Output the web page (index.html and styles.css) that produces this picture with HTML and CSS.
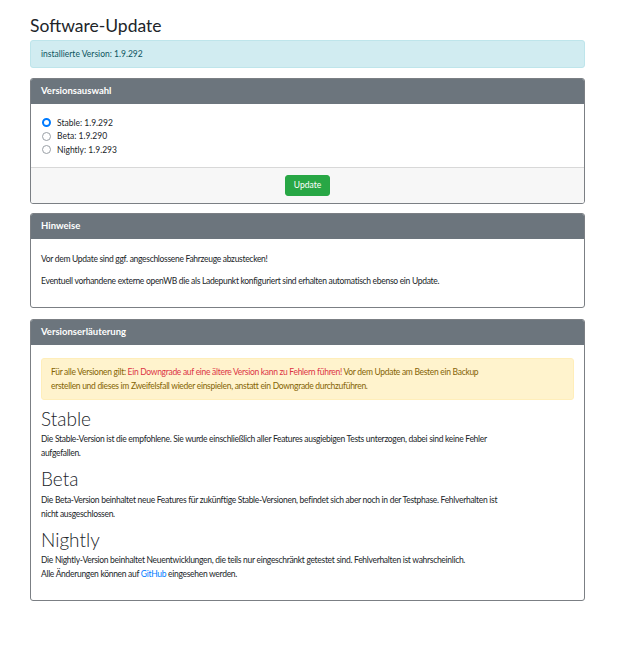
FILE: index.html
```html
<!DOCTYPE html>
<html lang="de">
<head>
    <meta charset="UTF-8">
    <title>Software-Update</title>
    <link rel="stylesheet" href="styles.css">
</head>
<body>
    <div class="container">
        <h1>Software-Update</h1>
        <div class="alert alert-info">installierte Version: 1.9.292</div>

        <div class="card">
            <div class="card-header">Versionsauswahl</div>
            <div class="card-body radios">
                <label class="radio"><span class="dot checked"></span>Stable: 1.9.292</label>
                <label class="radio"><span class="dot"></span>Beta: 1.9.290</label>
                <label class="radio"><span class="dot"></span>Nightly: 1.9.293</label>
            </div>
            <div class="card-footer">
                <button class="btn-success">Update</button>
            </div>
        </div>

        <div class="card">
            <div class="card-header">Hinweise</div>
            <div class="card-body">
                <p>Vor dem Update sind ggf. angeschlossene Fahrzeuge abzustecken!</p>
                <p>Eventuell vorhandene externe openWB die als Ladepunkt konfiguriert sind erhalten automatisch ebenso ein Update.</p>
            </div>
        </div>

        <div class="card">
            <div class="card-header">Versionserläuterung</div>
            <div class="card-body">
                <div class="alert alert-warning">
                    Für alle Versionen gilt: <span class="danger">Ein Downgrade auf eine ältere Version kann zu Fehlern führen!</span> Vor dem Update am Besten ein Backup erstellen und dieses im Zweifelsfall wieder einspielen, anstatt ein Downgrade durchzuführen.
                </div>
                <h2>Stable</h2>
                <p>Die Stable-Version ist die empfohlene. Sie wurde einschließlich aller Features ausgiebigen Tests unterzogen, dabei sind keine Fehler aufgefallen.</p>
                <h2>Beta</h2>
                <p>Die Beta-Version beinhaltet neue Features für zukünftige Stable-Versionen, befindet sich aber noch in der Testphase. Fehlverhalten ist nicht ausgeschlossen.</p>
                <h2>Nightly</h2>
                <p>Die Nightly-Version beinhaltet Neuentwicklungen, die teils nur eingeschränkt getestet sind. Fehlverhalten ist wahrscheinlich.<br>
                Alle Änderungen können auf <a href="#">GitHub</a> eingesehen werden.</p>
            </div>
        </div>
    </div>
</body>
</html>
```

FILE: styles.css
```css
* {
    margin: 0;
    padding: 0;
    box-sizing: border-box;
}

body {
    font-family: Lato, 'Open Sans', sans-serif;
    font-size: 8.5px;
    line-height: 14px;
    color: #212529;
    background: #fff;
}

.container {
    width: 555px;
    margin-left: 30px;
    padding-top: 14px;
}

h1 {
    font-size: 17.5px;
    font-weight: 400;
    line-height: 24px;
    margin-bottom: 2px;
}

.alert {
    border: 1px solid transparent;
    border-radius: 3px;
    padding: 6px 10px;
    margin-bottom: 10px;
}

.alert-info {
    background: #d1ecf1;
    border-color: #bee5eb;
    color: #0c5460;
}

.alert-warning {
    background: #fff3cd;
    border-color: #ffeeba;
    color: #856404;
    padding: 6px 66px 6px 9px;
    margin-bottom: 8px;
    letter-spacing: -0.3px;
}

.danger {
    color: #dc3545;
}

.card {
    border: 1px solid #7b7f84;
    border-radius: 3px;
    margin-bottom: 9px;
    overflow: hidden;
}

.card + .card + .card {
    margin-top: 11px;
}

.card-header {
    background: #6c757d;
    color: #fff;
    font-size: 9.5px;
    font-weight: 700;
    height: 25px;
    line-height: 24px;
    padding: 0 10px;
}

.card-body {
    padding: 13px 10px 11px;
}

.card-body p {
    max-width: 465px;
    margin-bottom: 8px;
    letter-spacing: -0.3px;
}

.radios {
    padding: 12px 10px 10px;
    display: flex;
    flex-direction: column;
}

.radio {
    display: flex;
    align-items: center;
    height: 13.5px;
}

.dot {
    width: 9px;
    height: 9px;
    border-radius: 50%;
    border: 1px solid #9aa0a6;
    background: #fff;
    margin: 0 6px 0 1px;
}

.dot.checked {
    border: 2.5px solid #007bff;
}

.card-footer {
    background: #f7f7f7;
    border-top: 1px solid #d8d8d8;
    height: 36px;
    display: flex;
    justify-content: center;
    align-items: center;
}

.btn-success {
    background: #28a745;
    color: #fff;
    border: 1px solid #28a745;
    border-radius: 3px;
    font: inherit;
    height: 21px;
    padding: 0 8px;
}

h2 {
    font-size: 19px;
    font-weight: 300;
    line-height: 21.5px;
    margin-bottom: 3px;
}

a {
    color: #007bff;
    text-decoration: none;
}
```
